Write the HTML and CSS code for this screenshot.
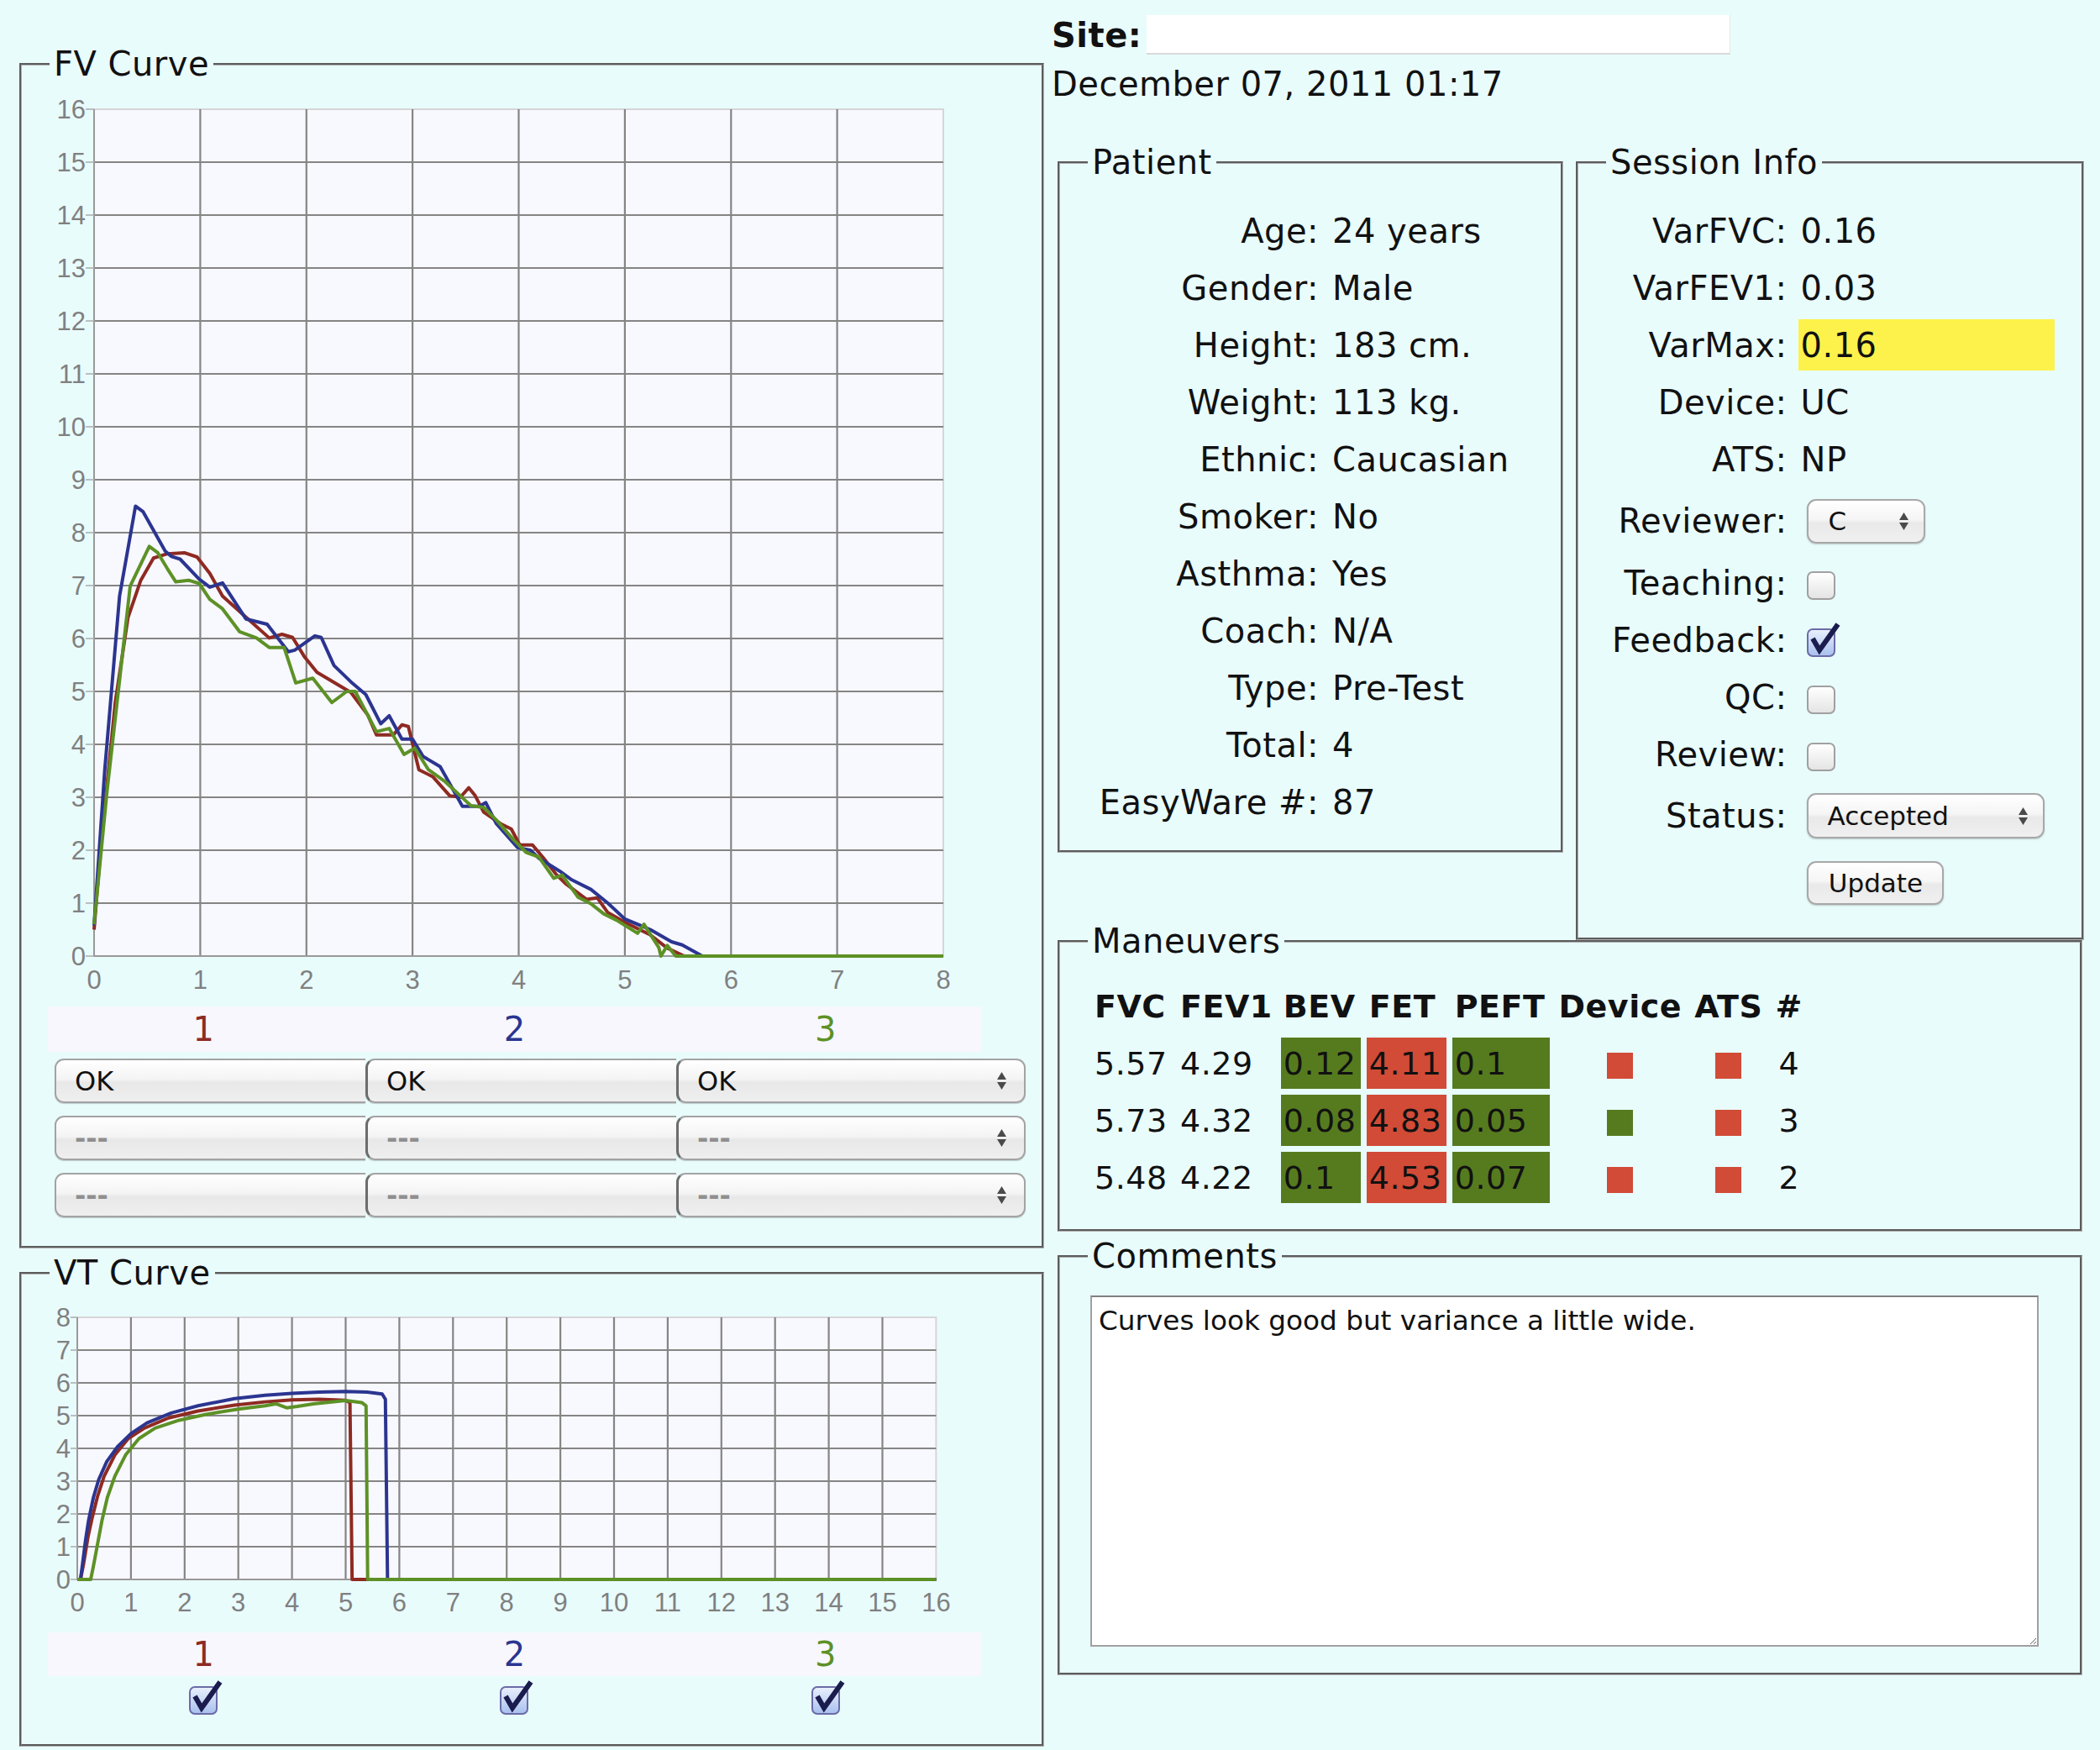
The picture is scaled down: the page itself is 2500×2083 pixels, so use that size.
FILE: index.html
```html
<!DOCTYPE html>
<html lang="en">
<head>
<meta charset="utf-8">
<title>Spirometry Session Review</title>
<link rel="stylesheet" href="styles.css">
</head>
<body>
<div class="page">
  <div class="left">
    <fieldset class="box fv">
      <legend>FV Curve</legend>
      <svg class="chart" width="1214" height="1102" viewBox="0 0 1214 1102">
        <rect class="plot" x="86" y="34" width="1011" height="1008"/>
        <path class="grid" d="M212.4 34V1042M338.8 34V1042M465.1 34V1042M591.5 34V1042M717.9 34V1042M844.3 34V1042M970.6 34V1042M86 979H1097M86 916H1097M86 853H1097M86 790H1097M86 727H1097M86 664H1097M86 601H1097M86 538H1097M86 475H1097M86 412H1097M86 349H1097M86 286H1097M86 223H1097M86 160H1097M86 97H1097"/>
        <path class="axis" d="M86 34V1042H1097"/>
        <path class="tick" d="M76 1042H86M76 979H86M76 916H86M76 853H86M76 790H86M76 727H86M76 664H86M76 601H86M76 538H86M76 475H86M76 412H86M76 349H86M76 286H86M76 223H86M76 160H86M76 97H86M76 34H86"/>
        <g class="ylab">
          <text x="76" y="1053">0</text><text x="76" y="990">1</text><text x="76" y="927">2</text><text x="76" y="864">3</text>
          <text x="76" y="801">4</text><text x="76" y="738">5</text><text x="76" y="675">6</text><text x="76" y="612">7</text>
          <text x="76" y="549">8</text><text x="76" y="486">9</text><text x="76" y="423">10</text><text x="76" y="360">11</text>
          <text x="76" y="297">12</text><text x="76" y="234">13</text><text x="76" y="171">14</text><text x="76" y="108">15</text>
          <text x="76" y="45">16</text>
        </g>
        <g class="xlab">
          <text x="86" y="1081">0</text><text x="212.4" y="1081">1</text><text x="338.8" y="1081">2</text>
          <text x="465.1" y="1081">3</text><text x="591.5" y="1081">4</text><text x="717.9" y="1081">5</text>
          <text x="844.3" y="1081">6</text><text x="970.6" y="1081">7</text><text x="1097" y="1081">8</text>
        </g>
        <g transform="translate(86 1042) scale(126.375 -63)">
          <polyline class="ln ln1" points="0,0.5 0.06,2.0 0.2,4.8 0.32,6.4 0.44,7.1 0.56,7.52 0.69,7.6 0.85,7.62 0.97,7.54 1.09,7.23 1.21,6.8 1.41,6.44 1.65,6.01 1.77,6.08 1.87,6.02 1.98,5.66 2.1,5.36 2.26,5.17 2.42,4.98 2.58,4.55 2.66,4.18 2.82,4.18 2.9,4.37 2.96,4.34 3.06,3.52 3.19,3.39 3.35,3.03 3.45,3 3.53,3.18 3.59,3.03 3.67,2.72 3.83,2.5 3.93,2.4 4.01,2.1 4.13,2.1 4.23,1.86 4.35,1.55 4.44,1.37 4.64,1.07 4.74,1.1 4.84,0.82 5,0.64 5.24,0.4 5.4,0.15 5.56,0 8,0"/>
          <polyline class="ln ln2" points="0,0.58 0.1,3.5 0.24,6.8 0.39,8.5 0.46,8.4 0.67,7.65 0.73,7.55 0.81,7.5 0.99,7.12 1.09,6.97 1.21,7.05 1.43,6.37 1.51,6.33 1.63,6.27 1.83,5.75 1.89,5.78 2.08,6.05 2.14,6.02 2.26,5.49 2.42,5.18 2.56,4.94 2.7,4.39 2.78,4.54 2.9,4.1 3,4.1 3.1,3.77 3.26,3.58 3.47,2.83 3.63,2.83 3.69,2.9 3.79,2.5 3.99,2.05 4.11,2 4.19,1.85 4.39,1.6 4.5,1.44 4.68,1.26 4.84,1 5,0.7 5.24,0.5 5.44,0.27 5.54,0.21 5.73,0 8,0"/>
          <polyline class="ln ln3" points="0,0.6 0.12,3.08 0.34,6.99 0.52,7.74 0.6,7.62 0.69,7.32 0.77,7.07 0.89,7.1 0.99,7.04 1.09,6.74 1.21,6.56 1.37,6.13 1.53,6.01 1.65,5.83 1.79,5.83 1.9,5.16 2.06,5.25 2.24,4.79 2.38,5 2.46,5 2.66,4.24 2.78,4.3 2.92,3.81 3.02,3.93 3.15,3.52 3.31,3.29 3.47,2.99 3.55,2.84 3.67,2.81 3.79,2.57 3.95,2.2 4.07,1.96 4.19,1.87 4.33,1.47 4.41,1.53 4.56,1.11 4.68,0.99 4.8,0.8 4.92,0.68 5.12,0.43 5.18,0.6 5.32,0.16 5.34,0 5.4,0.2 5.48,0 8,0"/>
        </g>
      </svg>
      <div class="trials">
        <span class="t1">1</span><span class="t2">2</span><span class="t3">3</span>
      </div>
      <div class="sel-rows">
        <div class="sel-row">
          <div class="seg s1">OK</div>
          <div class="seg s2">OK</div>
          <div class="seg s3"><span>OK</span><svg class="arr" width="11" height="21" viewBox="0 0 11 21"><path d="M0 9L5.5 0L11 9ZM0 12L5.5 21L11 12Z"/></svg></div>
        </div>
        <div class="sel-row">
          <div class="seg s1 empty">---</div>
          <div class="seg s2 empty">---</div>
          <div class="seg s3 empty"><span>---</span><svg class="arr" width="11" height="21" viewBox="0 0 11 21"><path d="M0 9L5.5 0L11 9ZM0 12L5.5 21L11 12Z"/></svg></div>
        </div>
        <div class="sel-row">
          <div class="seg s1 empty">---</div>
          <div class="seg s2 empty">---</div>
          <div class="seg s3 empty"><span>---</span><svg class="arr" width="11" height="21" viewBox="0 0 11 21"><path d="M0 9L5.5 0L11 9ZM0 12L5.5 21L11 12Z"/></svg></div>
        </div>
      </div>
    </fieldset>

    <fieldset class="box vt">
      <legend>VT Curve</legend>
      <svg class="chart" width="1214" height="408" viewBox="0 0 1214 408">
        <rect class="plot" x="66" y="33" width="1022.4" height="312"/>
        <path class="grid" d="M129.9 33V345M193.8 33V345M257.7 33V345M321.6 33V345M385.5 33V345M449.4 33V345M513.3 33V345M577.2 33V345M641.1 33V345M705 33V345M768.9 33V345M832.8 33V345M896.7 33V345M960.6 33V345M1024.5 33V345M66 306H1088.4M66 267H1088.4M66 228H1088.4M66 189H1088.4M66 150H1088.4M66 111H1088.4M66 72H1088.4"/>
        <path class="axis" d="M66 33V345H1088.4"/>
        <path class="tick" d="M58 345H66M58 306H66M58 267H66M58 228H66M58 189H66M58 150H66M58 111H66M58 72H66M58 33H66"/>
        <g class="ylab">
          <text x="58" y="356">0</text><text x="58" y="317">1</text><text x="58" y="278">2</text>
          <text x="58" y="239">3</text><text x="58" y="200">4</text><text x="58" y="161">5</text>
          <text x="58" y="122">6</text><text x="58" y="83">7</text><text x="58" y="44">8</text>
        </g>
        <g class="xlab">
          <text x="66" y="383">0</text><text x="129.9" y="383">1</text><text x="193.8" y="383">2</text>
          <text x="257.7" y="383">3</text><text x="321.6" y="383">4</text><text x="385.5" y="383">5</text>
          <text x="449.4" y="383">6</text><text x="513.3" y="383">7</text><text x="577.2" y="383">8</text>
          <text x="641.1" y="383">9</text><text x="705" y="383">10</text><text x="768.9" y="383">11</text>
          <text x="832.8" y="383">12</text><text x="896.7" y="383">13</text><text x="960.6" y="383">14</text>
          <text x="1024.5" y="383">15</text><text x="1088.4" y="383">16</text>
        </g>
        <g transform="translate(66 345) scale(63.9 -39)">
          <polyline class="ln ln1" points="0.06,0 0.12,0.5 0.2,1.3 0.28,1.9 0.38,2.55 0.5,3.15 0.7,3.8 0.95,4.3 1.25,4.62 1.7,4.93 2.25,5.14 2.93,5.32 3.5,5.42 4,5.48 4.5,5.5 5,5.47 5.08,5.4 5.12,0 16,0"/>
          <polyline class="ln ln2" points="0,0 0.06,0 0.1,0.5 0.15,1.15 0.21,1.8 0.3,2.5 0.4,3.05 0.55,3.6 0.75,4.05 1,4.45 1.3,4.78 1.75,5.08 2.25,5.3 2.93,5.52 3.5,5.62 4,5.68 4.5,5.72 5,5.74 5.4,5.72 5.68,5.66 5.74,5.5 5.78,0 16,0"/>
          <polyline class="ln ln3" points="0,0 0.25,0 0.3,0.4 0.38,1.1 0.46,1.8 0.56,2.5 0.7,3.15 0.9,3.8 1.15,4.3 1.45,4.62 1.9,4.86 2.4,5.04 3,5.2 3.5,5.3 3.7,5.36 3.9,5.24 4.1,5.28 4.4,5.36 5,5.46 5.3,5.4 5.38,5.3 5.41,0 16,0"/>
        </g>
      </svg>
      <div class="trials trials-vt">
        <span class="t1">1</span><span class="t2">2</span><span class="t3">3</span>
      </div>
      <div class="cb-row">
        <span class="cb on"><svg class="tickmark" width="42" height="42" viewBox="0 -7 42 42"><path d="M7 12L15 26L37 -5"/></svg></span>
        <span class="cb on"><svg class="tickmark" width="42" height="42" viewBox="0 -7 42 42"><path d="M7 12L15 26L37 -5"/></svg></span>
        <span class="cb on"><svg class="tickmark" width="42" height="42" viewBox="0 -7 42 42"><path d="M7 12L15 26L37 -5"/></svg></span>
      </div>
    </fieldset>
  </div>

  <div class="right">
    <div class="site-row">
      <span class="site-label">Site:</span>
      <div class="site-input"></div>
    </div>
    <div class="date">December 07, 2011 01:17</div>

    <div class="rbody">
      <div class="info-row">
        <fieldset class="box patient">
          <legend>Patient</legend>
          <div class="inner">
            <table class="kv">
              <tr><td class="k">Age:</td><td class="v">24 years</td></tr>
              <tr><td class="k">Gender:</td><td class="v">Male</td></tr>
              <tr><td class="k">Height:</td><td class="v">183 cm.</td></tr>
              <tr><td class="k">Weight:</td><td class="v">113 kg.</td></tr>
              <tr><td class="k">Ethnic:</td><td class="v">Caucasian</td></tr>
              <tr><td class="k">Smoker:</td><td class="v">No</td></tr>
              <tr><td class="k">Asthma:</td><td class="v">Yes</td></tr>
              <tr><td class="k">Coach:</td><td class="v">N/A</td></tr>
              <tr><td class="k">Type:</td><td class="v">Pre-Test</td></tr>
              <tr><td class="k">Total:</td><td class="v">4</td></tr>
              <tr><td class="k">EasyWare #:</td><td class="v">87</td></tr>
            </table>
          </div>
        </fieldset>

        <fieldset class="box session">
          <legend>Session Info</legend>
          <div class="inner">
            <table class="kv">
              <tr><td class="k">VarFVC:</td><td class="v">0.16</td></tr>
              <tr><td class="k">VarFEV1:</td><td class="v">0.03</td></tr>
              <tr><td class="k">VarMax:</td><td class="v hl">0.16</td></tr>
              <tr><td class="k">Device:</td><td class="v">UC</td></tr>
              <tr><td class="k">ATS:</td><td class="v">NP</td></tr>
              <tr class="tall"><td class="k">Reviewer:</td><td class="v"><span class="ctl sel-c"><span>C</span><svg class="arr" width="11" height="21" viewBox="0 0 11 21"><path d="M0 9L5.5 0L11 9ZM0 12L5.5 21L11 12Z"/></svg></span></td></tr>
              <tr><td class="k">Teaching:</td><td class="v"><span class="cb"></span></td></tr>
              <tr><td class="k">Feedback:</td><td class="v"><span class="cb on"><svg class="tickmark" width="42" height="42" viewBox="0 -7 42 42"><path d="M7 12L15 26L37 -5"/></svg></span></td></tr>
              <tr><td class="k">QC:</td><td class="v"><span class="cb"></span></td></tr>
              <tr><td class="k">Review:</td><td class="v"><span class="cb"></span></td></tr>
              <tr class="tall"><td class="k">Status:</td><td class="v"><span class="ctl sel-status"><span>Accepted</span><svg class="arr" width="11" height="21" viewBox="0 0 11 21"><path d="M0 9L5.5 0L11 9ZM0 12L5.5 21L11 12Z"/></svg></span></td></tr>
              <tr class="upd"><td class="k"></td><td class="v"><span class="ctl btn">Update</span></td></tr>
            </table>
          </div>
        </fieldset>
      </div>

      <fieldset class="box maneuvers">
        <legend>Maneuvers</legend>
        <div class="inner">
          <table class="mt">
            <tr>
              <th class="c1">FVC</th><th class="c2">FEV1</th><th class="c3">BEV</th><th class="c4">FET</th>
              <th class="c5">PEFT</th><th class="c6">Device</th><th class="c7">ATS</th><th class="c8">#</th>
            </tr>
            <tr>
              <td class="c1">5.57</td><td class="c2">4.29</td><td class="c3 g">0.12</td><td class="c4 r">4.11</td>
              <td class="c5 g">0.1</td><td class="c6"><span class="sq r"></span></td><td class="c7"><span class="sq r"></span></td><td class="c8">4</td>
            </tr>
            <tr>
              <td class="c1">5.73</td><td class="c2">4.32</td><td class="c3 g">0.08</td><td class="c4 r">4.83</td>
              <td class="c5 g">0.05</td><td class="c6"><span class="sq g"></span></td><td class="c7"><span class="sq r"></span></td><td class="c8">3</td>
            </tr>
            <tr>
              <td class="c1">5.48</td><td class="c2">4.22</td><td class="c3 g">0.1</td><td class="c4 r">4.53</td>
              <td class="c5 g">0.07</td><td class="c6"><span class="sq r"></span></td><td class="c7"><span class="sq r"></span></td><td class="c8">2</td>
            </tr>
          </table>
        </div>
      </fieldset>

      <fieldset class="box comments">
        <legend>Comments</legend>
        <div class="inner">
          <textarea class="ta">Curves look good but variance a little wide.</textarea>
        </div>
      </fieldset>
    </div>
  </div>
</div>
</body>
</html>
```

FILE: styles.css
```css
html, body {
  margin: 0;
  padding: 0;
}

body {
  background: #e9fcfc;
  font-family: "DejaVu Sans", Verdana, sans-serif;
  font-size: 40px;
  letter-spacing: 0.5px;
  color: #111;
}

.page {
  display: grid;
  grid-template-columns: 1243px 1257px;
  width: 2500px;
  min-height: 2083px;
}

.left {
  padding: 56px 0 0 23px;
}

.right {
  padding: 0 0 0 9px;
}

/* fieldsets */
.box {
  margin: 0;
  padding: 0;
  border: 3px groove #b0b0b0;
  box-sizing: border-box;
  min-width: 0;
}

.box > legend {
  margin-left: 33px;
  padding: 0 5px;
  font-size: 40px;
  line-height: 40px;
}

.fv, .vt {
  width: 1220px;
}

.vt {
  margin-top: 9px;
}

/* charts */
.chart {
  display: block;
}

.chart text {
  font-family: "Liberation Sans", Arial, sans-serif;
  font-size: 31px;
  letter-spacing: 0;
  fill: #808080;
}

.ylab text {
  text-anchor: end;
}

.xlab text {
  text-anchor: middle;
}

.plot {
  fill: #f8f8ff;
  stroke: #d6d6d6;
  stroke-width: 2;
}

.grid {
  fill: none;
  stroke: #858585;
  stroke-width: 2.2;
}

.axis {
  fill: none;
  stroke: #999;
  stroke-width: 2;
}

.tick {
  stroke: #aaa;
  stroke-width: 1.5;
}

.ln {
  fill: none;
  stroke-width: 4;
  stroke-linejoin: round;
  vector-effect: non-scaling-stroke;
}

.ln1 { stroke: #8e2a22; }
.ln2 { stroke: #2b3590; }
.ln3 { stroke: #5d9126; }

/* trial labels */
.trials {
  display: grid;
  grid-template-columns: repeat(3, 1fr);
  align-items: center;
  justify-items: center;
  width: 1111px;
  height: 54px;
  margin-left: 31px;
  background: #f7f7fd;
  letter-spacing: 0;
}

.trials-vt {
  height: 52px;
}

.t1 { color: #8e2a22; }
.t2 { color: #2b3590; }
.t3 { color: #5d9126; }

/* select rows */
.sel-rows {
  display: flex;
  flex-direction: column;
  gap: 15px;
  width: 1156px;
  margin: 8px 0 0 39px;
  padding-bottom: 34px;
}

.sel-row {
  display: flex;
  height: 53px;
}

.seg {
  box-sizing: border-box;
  height: 53px;
  display: flex;
  align-items: center;
  padding-left: 22px;
  border: 2px solid #a3a3a3;
  border-radius: 11px 0 0 11px;
  background: linear-gradient(#ffffff, #f4f4f4 46%, #e8e8e8 54%, #efefef);
  box-shadow: 0 1px 1px rgba(0, 0, 0, 0.18);
  font-size: 32px;
  letter-spacing: 0;
}

.s1 {
  width: 370px;
  border-right: 0;
}

.s2 {
  width: 370px;
  border-left: 3px solid #6c6c6c;
  border-right: 0;
}

.s3 {
  width: 416px;
  border-left: 3px solid #6c6c6c;
  border-radius: 11px;
  justify-content: space-between;
  padding-right: 21px;
}

.empty {
  color: #8f8f8f;
  font-weight: bold;
}

.arr path {
  fill: #4a4a4a;
}

/* checkboxes */
.cb-row {
  display: grid;
  grid-template-columns: repeat(3, 1fr);
  justify-items: center;
  width: 1111px;
  margin: 12px 0 0 31px;
  padding-bottom: 35px;
}

.cb {
  position: relative;
  display: inline-block;
  width: 34px;
  height: 34px;
  box-sizing: border-box;
  border: 2px solid #a0a0a0;
  border-radius: 7px;
  background: linear-gradient(#ffffff, #e4e4e4);
  vertical-align: middle;
}

.kv .cb {
  margin-left: 8px;
}

.cb.on {
  border-color: #6b6ba8;
  background: linear-gradient(#e8effc, #a9c1ee);
}

.tickmark {
  position: absolute;
  left: -2px;
  top: -9px;
  overflow: visible;
}

.tickmark path {
  fill: none;
  stroke: #1b1c4e;
  stroke-width: 6;
  stroke-linejoin: miter;
}

/* right column */
.site-row {
  display: flex;
  align-items: center;
  gap: 6px;
  height: 47px;
  margin-top: 18px;
}

.site-label {
  font-weight: bold;
}

.site-input {
  width: 695px;
  height: 47px;
  box-sizing: border-box;
  background: #fff;
  border-bottom: 2px solid #d9d9d9;
  border-right: 1px solid #e6e6e6;
}

.date {
  margin-top: 11px;
  line-height: 48px;
}

.rbody {
  margin-left: 7px;
}

.info-row {
  display: flex;
  align-items: flex-start;
  gap: 15px;
  margin-top: 49px;
}

.patient {
  width: 602px;
}

.session {
  width: 605px;
}

.patient .inner {
  padding: 24px 0 20px 38px;
}

.session .inner {
  padding: 24px 0 21px 40px;
}

.kv {
  border-collapse: separate;
  border-spacing: 0 7px;
}

.kv td {
  height: 61px;
  padding: 0;
  vertical-align: middle;
  white-space: nowrap;
}

.kv .tall td {
  height: 72px;
}

.kv .upd td {
  height: 74px;
}

.patient .k {
  width: 270px;
  padding-right: 16px;
  text-align: right;
}

.session .k {
  width: 205px;
  padding-right: 14px;
  text-align: right;
}

.session .v {
  width: 303px;
  padding-left: 2px;
}

.hl {
  background: #fdf24b;
}

/* form controls */
.ctl {
  display: inline-flex;
  align-items: center;
  box-sizing: border-box;
  margin-left: 8px;
  border: 2px solid #a8a8a8;
  border-radius: 11px;
  background: linear-gradient(#ffffff, #f5f5f5 46%, #e9e9e9 54%, #f0f0f0);
  box-shadow: 0 1px 2px rgba(0, 0, 0, 0.2);
  font-size: 31px;
  letter-spacing: 0;
  vertical-align: middle;
}

.sel-c {
  width: 141px;
  height: 53px;
  padding: 0 18px 0 23px;
  justify-content: space-between;
}

.sel-status {
  width: 283px;
  height: 54px;
  padding: 0 18px 0 22px;
  justify-content: space-between;
}

.btn {
  width: 163px;
  height: 52px;
  justify-content: center;
}

/* maneuvers */
.maneuvers {
  width: 1220px;
  margin-top: -19px;
}

.maneuvers .inner {
  padding: 20px 0 24px 31px;
}

.mt {
  border-collapse: separate;
  border-spacing: 7px;
  font-size: 38px;
}

.mt th,
.mt td {
  height: 61px;
  padding: 0 3px;
  white-space: nowrap;
  text-align: left;
  vertical-align: middle;
}

.mt th {
  font-weight: bold;
}

.c1 { width: 89px; }
.c2 { width: 108px; }
.c3 { width: 89px; }
.c4 { width: 89px; }
.c5 { width: 110px; }
.mt .c6 { width: 148px; text-align: center; }
.mt .c7 { width: 84px; text-align: center; }
.mt .c8 { width: 34px; text-align: center; }

.mt .g { background: #567b1f; }
.mt .r { background: #d14b37; }

.sq {
  display: inline-block;
  width: 31px;
  height: 31px;
  vertical-align: middle;
}

.sq.g { background: #567b1f; }
.sq.r { background: #d14b37; }

/* comments */
.comments {
  width: 1220px;
  margin-top: 9px;
}

.comments .inner {
  padding: 27px 0 31px 36px;
}

.ta {
  display: block;
  width: 1129px;
  height: 418px;
  margin: 0;
  box-sizing: border-box;
  padding: 9px 8px;
  border: 2px solid #a0a0a0;
  border-top-color: #808080;
  background: #fff;
  color: #111;
  font-family: "DejaVu Sans", Verdana, sans-serif;
  font-size: 32.7px;
  letter-spacing: 0;
  resize: both;
}
```
